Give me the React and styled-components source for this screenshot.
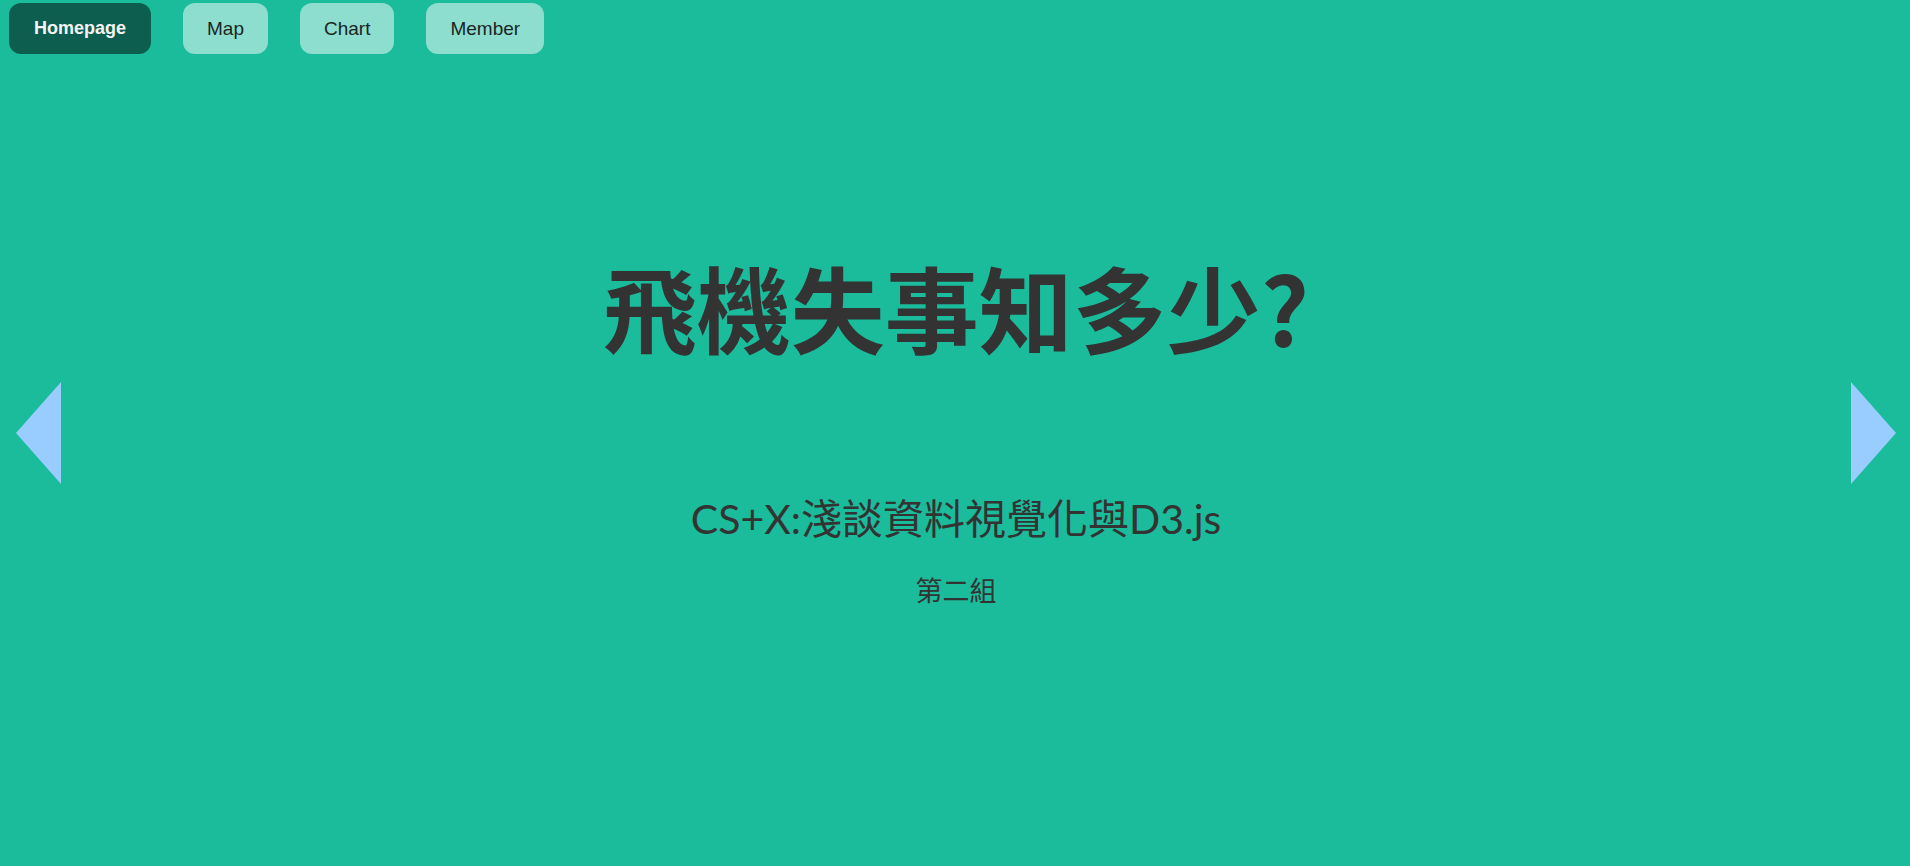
import React from 'react';
import styled, { createGlobalStyle } from "styled-components";

const GlobalStyle = createGlobalStyle`
    html, body
    {
        margin: 0;
        padding: 0;
        background: #1abc9c;
    }
`;

const Page = styled.div`
    height: 100vh;
    display: flex;
    flex-direction: column;
    background: #1abc9c;
    overflow: hidden;
`;

const Nav = styled.nav`
    height: 54px;
    padding: 3px 9px 0;
    box-sizing: border-box;
    display: flex;
    gap: 32px;
    align-items: flex-start;
`;

const NavButton = styled.a`
    height: 51px;
    padding: 0 ${p => p.$active ? 25 : 24}px;
    display: flex;
    align-items: center;
    border-radius: 12px;
    font-family: "Liberation Sans", Arial, sans-serif;
    font-size: ${p => p.$active ? 18 : 19}px;
    font-weight: ${p => p.$active ? 700 : 400};
    color: ${p => p.$active ? "#f4f4f4" : "#1b2523"};
    background: ${p => p.$active ? "rgba(0, 0, 0, 0.5)" : "rgba(255, 255, 255, 0.5)"};
    text-decoration: none;
    cursor: pointer;
`;

const Stage = styled.main`
    flex: 1;
    display: flex;
    align-items: center;
    padding: 0 14px 55px 16px;
`;

const Arrow = styled.button`
    width: 0;
    height: 0;
    padding: 0;
    background: none;
    border-top: 51px solid transparent;
    border-bottom: 51px solid transparent;
    border-left: ${p => p.$dir === "right" ? "45px solid #99ccff" : "0"};
    border-right: ${p => p.$dir === "left" ? "45px solid #99ccff" : "0"};
    cursor: pointer;
`;

const Content = styled.section`
    flex: 1;
    display: flex;
    flex-direction: column;
    align-items: center;
    padding-bottom: 3px;
    color: #333333;
    font-family: "Noto Sans CJK TC", "Noto Sans", sans-serif;
`;

const Title = styled.h1`
    margin: 0;
    font-size: 94px;
    font-weight: 700;
    line-height: 1;
`;

const Subtitle = styled.h2`
    margin: 145px 0 0;
    font-family: Lato, "Noto Sans CJK TC", sans-serif;
    font-size: 41px;
    font-weight: 400;
    line-height: 1;
`;

const Team = styled.p`
    margin: 37px 0 0;
    font-size: 27px;
    line-height: 1;
`;

const navMenu = ["Homepage", "Map", "Chart", "Member"];

const App = () =>
{
    return (
        <Page>
            <GlobalStyle />
            <Nav>
                {navMenu.map((x, y) => (
                    <NavButton key={y} $active={y === 0}>
                        {x}
                    </NavButton>
                ))}
            </Nav>
            <Stage>
                <Arrow $dir="left" aria-label="previous" />
                <Content>
                    <Title>飛機失事知多少?</Title>
                    <Subtitle>CS+X:淺談資料視覺化與D3.js</Subtitle>
                    <Team>第二組</Team>
                </Content>
                <Arrow $dir="right" aria-label="next" />
            </Stage>
        </Page>
    )
}

export default App
